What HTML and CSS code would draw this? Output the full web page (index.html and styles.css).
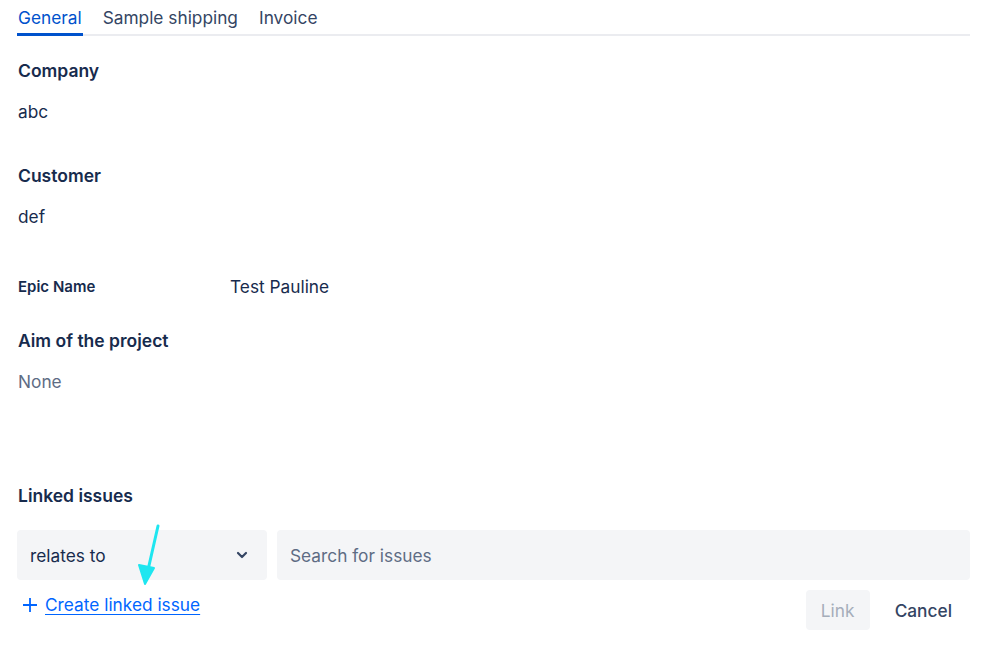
FILE: index.html
```html
<!doctype html>
<html lang="en">
<head>
    <meta charset="UTF-8">
    <title>Issue details</title>
    <link rel="stylesheet" href="styles.css">
</head>
<body>
    <div class="panel">
        <div class="tabs">
            <span class="tab active">General</span>
            <span class="tab">Sample shipping</span>
            <span class="tab">Invoice</span>
        </div>

        <div class="field field-first">
            <div class="label">Company</div>
            <div class="value">abc</div>
        </div>
        <div class="field">
            <div class="label">Customer</div>
            <div class="value">def</div>
        </div>

        <div class="inline-field">
            <span class="inline-label">Epic Name</span>
            <span class="inline-value">Test Pauline</span>
        </div>

        <div class="field field-aim">
            <div class="label">Aim of the project</div>
            <div class="value empty">None</div>
        </div>

        <div class="linked">
            <div class="label">Linked issues</div>
            <div class="link-row">
                <div class="select">
                    <span>relates to</span>
                    <svg class="chev" width="12" height="8" viewBox="0 0 12 8"><path d="M2 2l4 4 4-4" fill="none" stroke="#344563" stroke-width="2.2" stroke-linecap="round" stroke-linejoin="round"/></svg>
                </div>
                <div class="search">Search for issues</div>
            </div>
            <div class="actions">
                <a class="create" href="#">
                    <svg width="16" height="16" viewBox="0 0 16 16"><path d="M8 1v14M1 8h14" stroke="#0065ff" stroke-width="1.8"/></svg>
                    <span>Create linked issue</span>
                </a>
                <div class="buttons">
                    <span class="btn btn-disabled">Link</span>
                    <span class="btn btn-subtle">Cancel</span>
                </div>
            </div>
        </div>

        <!-- annotation arrow -->
        <svg class="arrow" width="40" height="70" viewBox="0 0 40 70">
            <path d="M30 2L20 46" stroke="#1ee6f0" stroke-width="3" stroke-linecap="round"/>
            <path d="M11 41L17 60L26 44Z" fill="#1ee6f0" stroke="#1ee6f0" stroke-width="2" stroke-linejoin="round"/>
        </svg>
    </div>
</body>
</html>
```

FILE: styles.css
```css
*{
    margin: 0;
    padding: 0;
    box-sizing: border-box;
}
body{
    background: #fff;
    font-family: Inter, "Noto Sans", sans-serif;
    color: #172b4d;
}
.panel{
    position: relative;
    width: 970px;
    padding-left: 17px;
}
.tabs{
    display: flex;
    gap: 19px;
    border-bottom: 2px solid #ebecf0;
    padding-top: 6px;
}
.tab{
    font-size: 17.3px;line-height: 23px;color: #344563;
    padding: 0 1px 4px;
    margin-bottom: -2px;
    border-bottom: 3px solid transparent;
}
.tab.active{
    color: #0052cc;border-bottom-color: #0052cc;
}
.label{
    font-size: 17.5px;font-weight: 600;line-height: 24px;color: #172b4d;
    padding-left: 1px;
}
.value{
    font-size: 17.3px;line-height: 24px;margin-top: 17px;color: #172b4d;
    padding-left: 1px;
}
.value.empty{
    color: #5e6c84;
}
.field{
    margin-top: 40px;
}
.field-first{
    margin-top: 23px;
}
.inline-field{
    display: flex;align-items: center;margin-top: 45px;height: 24px;padding-left: 1px;
}
.inline-label{
    width: 212px;font-size: 15px;font-weight: 600;color: #172b4d;
}
.inline-value{
    font-size: 17.3px;color: #172b4d;
}
.field-aim{
    margin-top: 31px;
}
.linked{
    margin-top: 90px;
}
.link-row{
    display: flex;gap: 10px;margin-top: 22px;
}
.select, .search{
    height: 50px;background: #f4f5f7;border-radius: 4px;
    display: flex;align-items: center;font-size: 17.3px;
}
.select{
    width: 250px;padding: 0 19px 0 13px;justify-content: space-between;color: #172b4d;
}
.search{
    flex: 1;padding-left: 13px;color: #5e6c84;
}
.actions{
    display: flex;justify-content: space-between;align-items: flex-start;
}
.create{
    display: flex;align-items: center;gap: 7px;margin-top: 13px;padding-left: 5px;
    font-size: 17.3px;line-height: 24px;color: #0065ff;text-decoration: none;
}
.create span{
    text-decoration: underline;text-underline-offset: 3px;
}
.buttons{
    display: flex;gap: 8px;margin-top: 10px;margin-right: 1px;
}
.btn{
    height: 40px;display: flex;align-items: center;justify-content: center;
    font-size: 17.3px;border-radius: 4px;padding: 0 17px;
}
.btn-disabled{
    background: #f4f5f7;color: #a5adba;width: 64px;
}
.btn-subtle{
    color: #344563;font-weight: 500;
}
.arrow{
    position: absolute;left: 128px;top: 524px;
}
```
